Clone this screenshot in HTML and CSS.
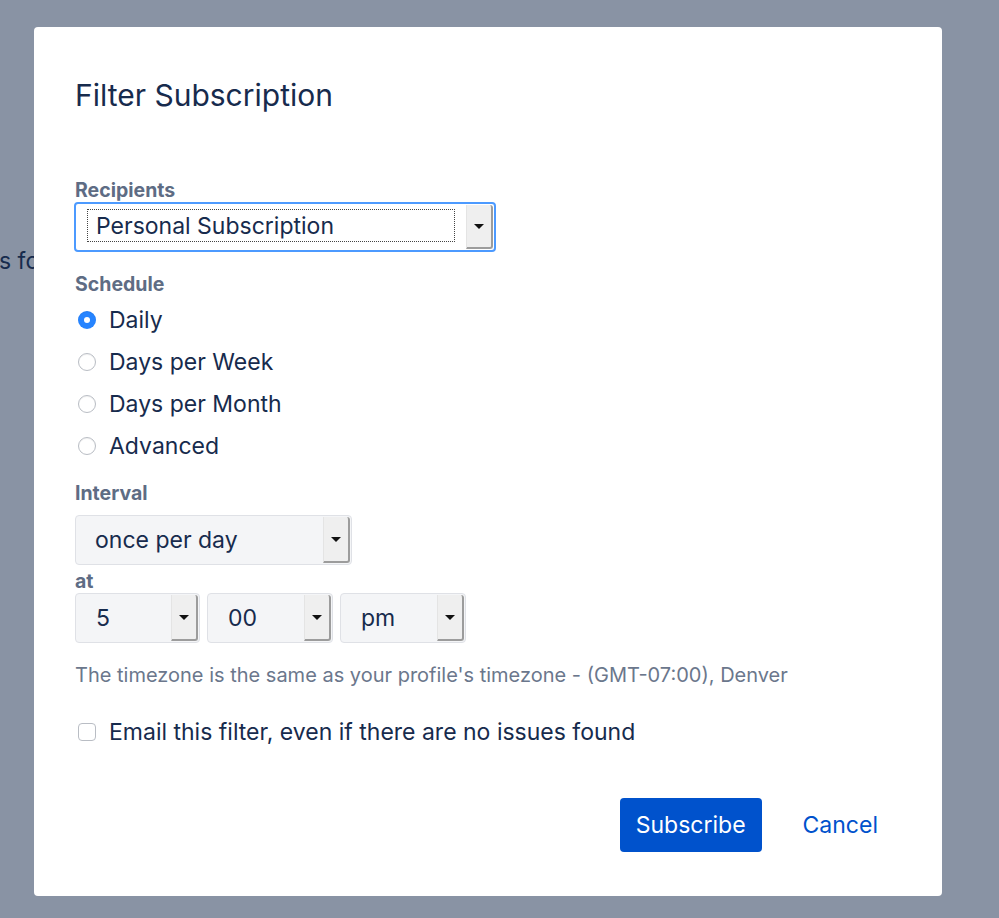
FILE: index.html
```html
<!DOCTYPE html>
<html lang="en">
<head>
    <meta charset="UTF-8">
    <title>Filter Subscription</title>
    <link rel="stylesheet" href="styles.css">
</head>
<body>
    <!-- page text behind the dialog -->
    <div class="page-text">s for</div>

    <section class="dialog">
        <h1 class="dialog-title">Filter Subscription</h1>

        <div class="field field-recipients">
            <label class="field-label">Recipients</label>
            <div class="select select-focus select-wide">
                <span class="select-value focus-ring">Personal Subscription</span>
                <span class="select-arrow"></span>
            </div>
        </div>

        <div class="field">
            <label class="field-label">Schedule</label>
            <ul class="radio-list">
                <li><span class="radio checked"></span>Daily</li>
                <li><span class="radio"></span>Days per Week</li>
                <li><span class="radio"></span>Days per Month</li>
                <li><span class="radio"></span>Advanced</li>
            </ul>
        </div>

        <div class="field">
            <label class="field-label label-interval">Interval</label>
            <div class="select select-interval">
                <span class="select-value">once per day</span>
                <span class="select-arrow"></span>
            </div>
            <label class="field-label label-at">at</label>
            <div class="time-row">
                <div class="select select-time">
                    <span class="select-value">5</span>
                    <span class="select-arrow"></span>
                </div>
                <div class="select select-time">
                    <span class="select-value">00</span>
                    <span class="select-arrow"></span>
                </div>
                <div class="select select-time">
                    <span class="select-value">pm</span>
                    <span class="select-arrow"></span>
                </div>
            </div>
            <p class="hint">The timezone is the same as your profile's timezone - (GMT-07:00), Denver</p>
        </div>

        <div class="check-row"><span class="checkbox"></span>Email this filter, even if there are no issues found</div>

        <div class="dialog-footer">
            <button class="btn-primary">Subscribe</button>
            <a href="#" class="btn-link">Cancel</a>
        </div>
    </section>
</body>
</html>
```

FILE: styles.css
```css
:root {
    --text: #172b4d;
    --label: #5e6c84;
    --subtle: #6b778c;
    --blue: #0052cc;
    --overlay: #8993a4;
}

* {
    margin: 0;
    padding: 0;
    box-sizing: border-box;
}

body {
    position: relative;
    background: var(--overlay);
    font-family: Inter, 'Liberation Sans', Arial, sans-serif;
    color: var(--text);
    height: 918px;
    overflow: hidden;
    padding: 27px 0 0 34px;
}

.page-text {
    position: absolute;
    left: -1px;
    top: 247px;
    font-size: 23px;
    color: #172b4d;
}

/* Dialog */
.dialog {
    position: relative;
    width: 908px;
    height: 869px;
    background: #fff;
    border-radius: 4px;
    padding: 48px 41px 0 41px;
}

.dialog-title {
    font-size: 30px;
    font-weight: 400;
    line-height: 40px;
    margin-bottom: 63px;
}

.field-label {
    display: block;
    font-size: 19.5px;
    font-weight: 700;
    color: var(--label);
    line-height: 24px;
}

.field {
    margin-bottom: 14px;
}

.field-recipients {
    margin-bottom: 20px;
}

/* Fake selects */
.select {
    display: flex;
    align-items: stretch;
    height: 50px;
    background: #f4f5f7;
    border: 1px solid #dfe1e6;
    border-radius: 4px;
    font-size: 23px;
}

.select-value {
    flex: 1;
    display: flex;
    align-items: center;
    padding-left: 19px;
}

.select-arrow {
    width: 27px;
    margin: 1px 1px 1px 0;
    background: #efefef;
    border-left: 1px solid #e4e4e4;
    border-right: 2px solid #9c9c9c;
    border-bottom: 2px solid #9c9c9c;
    border-radius: 0 3px 3px 0;
    display: flex;
    align-items: center;
    justify-content: center;
}

.select-arrow::after {
    content: "";
    border-left: 5px solid transparent;
    border-right: 5px solid transparent;
    border-top: 5px solid #111;
}

.select-wide {
    width: 422px;
    margin-left: -1px;
    background: #fff;
}

.select-focus {
    border: 2px solid #4c9aff;
}

.focus-ring {
    margin: 5px 11px 8px 11px;
    padding-left: 8px;
    border: 1px dotted #444;
}

.label-interval {
    margin-bottom: 10px;
}

.select-interval {
    width: 277px;
}

.label-at {
    margin-top: 5px;
    line-height: 23px;
}

.time-row {
    display: flex;
    gap: 7px;
}

.select-time {
    width: 126px;
}

.select-time:first-child {
    width: 125px;
}

.select-time .select-value {
    padding-left: 20px;
}

.hint {
    margin-top: 19px;
    font-size: 20px;
    color: var(--subtle);
    line-height: 26px;
}

/* Radios */
.radio-list {
    list-style: none;
    padding-top: 3px;
}

.radio-list li {
    display: flex;
    align-items: center;
    height: 42px;
    font-size: 23px;
}

.radio {
    width: 18px;
    height: 18px;
    border-radius: 50%;
    border: 1px solid #b9bdc4;
    background: #fff;
    margin: 0 13px 0 3px;
    box-shadow: inset 0 1px 1px rgba(0,0,0,0.06);
}

.radio.checked {
    border: none;
    background: #2684ff;
    position: relative;
}

.radio.checked::after {
    content: "";
    position: absolute;
    top: 6px;
    left: 6px;
    width: 6px;
    height: 6px;
    border-radius: 50%;
    background: #fff;
}

/* Checkbox */
.check-row {
    display: flex;
    align-items: center;
    height: 40px;
    margin-top: 24px;
    font-size: 23px;
}

.checkbox {
    width: 18px;
    height: 18px;
    border: 1px solid #b9bdc4;
    border-radius: 4px;
    background: #fff;
    margin: 0 13px 0 3px;
}

/* Footer */
.dialog-footer {
    display: flex;
    justify-content: flex-end;
    align-items: center;
    gap: 41px;
    margin-top: 46px;
    padding-right: 23px;
}

.btn-primary {
    height: 54px;
    padding: 0 16px;
    background: var(--blue);
    color: #fff;
    border: none;
    border-radius: 4px;
    font-family: inherit;
    font-size: 23px;
}

.btn-link {
    color: var(--blue);
    text-decoration: none;
    font-size: 23px;
}
```
